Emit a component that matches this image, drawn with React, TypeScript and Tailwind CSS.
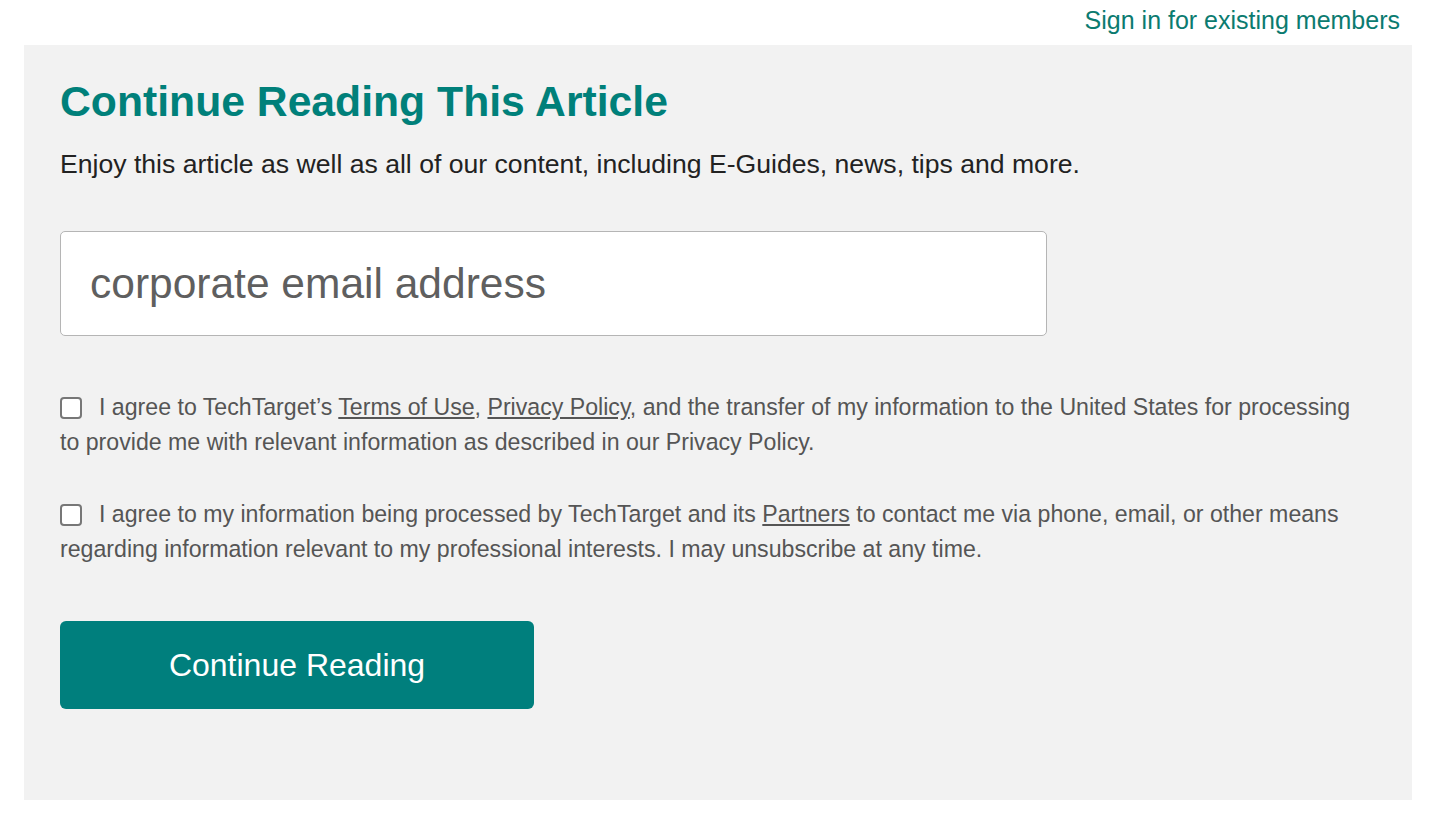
import React from 'react';

const font = { fontFamily: '"Liberation Sans", Arial, sans-serif' };

export default function App() {
  return (
    <div className="min-h-[827px] bg-white text-[#222]" style={font}>
      <div className="flex h-[45px] items-start justify-end pr-[32px] pt-[4px]">
        <a href="#" className="text-[25px] leading-[32px] text-[#0b7b70]">
          Sign in for existing members
        </a>
      </div>
      <div className="ml-[24px] mr-[20px] h-[755px] bg-[#f2f2f2] pl-[36px] pr-[40px] pt-[30px]">
        <h1 className="text-[42.7px] font-bold leading-[52px] text-[#00807a]">Continue Reading This Article</h1>
        <p className="mt-[19px] text-[26.6px] leading-[36px] text-[#222]">
          Enjoy this article as well as all of our content, including E-Guides, news, tips and more.
        </p>
        <input
          type="text"
          placeholder="corporate email address"
          className="mt-[49px] block h-[105px] w-[987px] rounded-[5px] border border-[#b5b5b5] bg-white px-[29px] text-[42.5px] text-[#555] outline-none placeholder:text-[#5f5f5f]"
        />
        <div className="mt-[54px] flex flex-col gap-[37px] text-[23.15px] leading-[35px] text-[#555]">
          <label className="block">
            <input type="checkbox" className="mr-[17px] inline-block h-[22px] w-[22px] -translate-y-[1px] appearance-none rounded-[4px] border-2 border-[#777] bg-white align-middle" />
            I agree to TechTarget’s <a href="#" className="underline">Terms of Use</a>,{' '}
            <a href="#" className="underline">Privacy Policy</a>, and the transfer of my information to the United States for
            processing to provide me with relevant information as described in our Privacy Policy.
          </label>
          <label className="block">
            <input type="checkbox" className="mr-[17px] inline-block h-[22px] w-[22px] -translate-y-[1px] appearance-none rounded-[4px] border-2 border-[#777] bg-white align-middle" />
            I agree to my information being processed by TechTarget and its <a href="#" className="underline">Partners</a> to
            contact me via phone, email, or other means regarding information relevant to my professional interests. I may
            unsubscribe at any time.
          </label>
        </div>
        <button className="mt-[54px] h-[88px] w-[474px] rounded-[6px] bg-[#007f7d] text-[32px] text-white">
          Continue Reading
        </button>
      </div>
    </div>
  );
}
